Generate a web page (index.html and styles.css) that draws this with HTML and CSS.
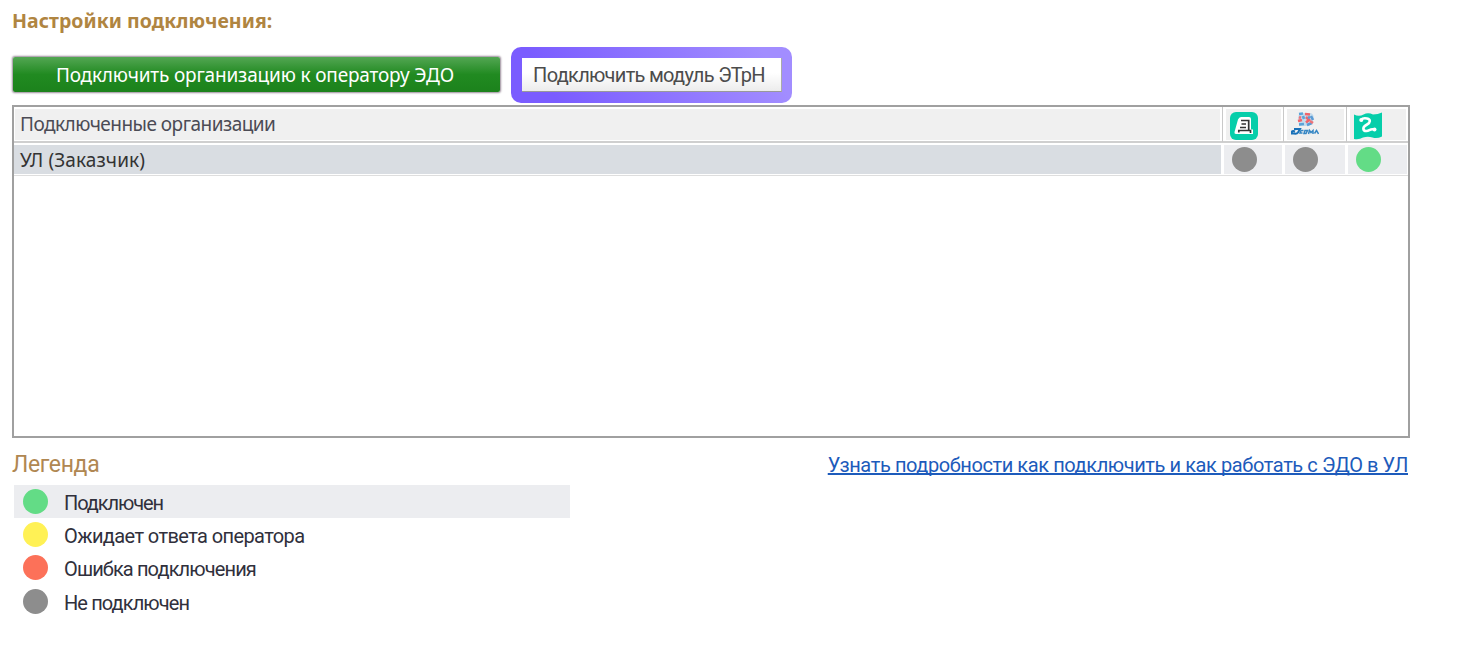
FILE: index.html
```html
<!DOCTYPE html>
<html lang="ru">
<head>
    <meta charset="utf-8">
    <title>Настройки подключения</title>
    <link rel="stylesheet" href="styles.css">
</head>
<body>
    <h1><span>Настройки подключения:</span></h1>

    <div class="buttons">
        <button type="button" class="btn-green"><span>Подключить организацию к оператору ЭДО</span></button>
        <div class="highlight">
            <button type="button" class="btn-light"><span>Подключить модуль ЭТрН</span></button>
        </div>
    </div>

    <div class="grid">
        <div class="row head">
            <div class="cell name"><span>Подключенные организации</span></div>
            <div class="cell">
                <svg class="icon" width="28" height="28" viewBox="0 0 28 28">
                    <rect width="28" height="28" rx="6" fill="#06ceaa"/>
                    <path d="M11 5H19Q21 5 21 7V17.500H23V22H6Q4 22 4.500 20L8 7.500Q9 5 11 5Z" fill="#fff"/>
                    <path d="M11 8.500H18.700V18.500M11.500 12H16M10 15.500H16M8.800 20.500V18.500H20.500V21" fill="none" stroke="#333" stroke-width="1.700"/>
                </svg>
            </div>
            <div class="cell">
                <svg class="icon" width="28" height="28" viewBox="0 0 28 28">
                    <path d="M9 1H20Q24 3 22 8Q22 12 17 14H8V9Q6 4 9 1Z" fill="#c4dcee"/>
                    <g fill="none" stroke-width="2.600">
                        <path d="M8 2L12 1.500M8 12.500L13 12M12 4L13 7" stroke="#5ba3d8"/>
                        <path d="M14 2L19 2.500M15 5L18 8L15 10.500M7 9L11 8" stroke="#f0646a"/>
                        <path d="M20 4L22 8M16 13L21 11M17 5L19 6" stroke="#5b9bd5"/>
                        <path d="M8 5L10 6M19 9L22 11" stroke="#ee7277"/>
                    </g>
                    <path d="M3 17H9L7 20.500Q6 22 3 21.500H0Q1 18 4 19.500" fill="none" stroke="#1770b8" stroke-width="2"/>
                    <path d="M12.500 18.500H10L9 21H11.500M14 18.500L13 21.500H15L16.500 18.500ZM17.500 22L18.500 18.500L20 20.500L22 18.500V22M23.500 21.500L25.500 18.500L27.500 22" fill="none" stroke="#3586c4" stroke-width="1.500"/>
                </svg>
            </div>
            <div class="cell">
                <svg class="icon" width="28" height="28" viewBox="0 0 28 28">
                    <path d="M0 2.500Q5 5 9.500 2.500T19 2.500Q24 2.500 28 .5V24.500Q23 27 18.500 25.500T9 25.500Q5 28 0 27Z" fill="#06ceaa"/>
                    <path d="M7 8Q9 5.500 13 6.500C17 7.500 16.500 10.500 13 12.500C8 15 8.500 19 12.500 19C15.500 19 16 16.500 20 17.500" fill="none" stroke="#fff" stroke-width="2.600" stroke-linecap="round"/>
                    <circle cx="7.300" cy="8" r="2" fill="#fff"/>
                    <circle cx="20.500" cy="17.500" r="2" fill="#fff"/>
                </svg>
            </div>
        </div>
        <div class="row data">
            <div class="cell name"><span>УЛ (Заказчик)</span></div>
            <div class="cell"><i class="dot gray"></i></div>
            <div class="cell"><i class="dot gray"></i></div>
            <div class="cell"><i class="dot green"></i></div>
        </div>
    </div>

    <div class="footer">
        <div class="legend">
            <h2><span>Легенда</span></h2>
            <ul>
                <li class="active"><i class="dot green"></i><span class="l1">Подключен</span></li>
                <li><i class="dot yellow"></i><span class="l2">Ожидает ответа оператора</span></li>
                <li><i class="dot red"></i><span class="l3">Ошибка подключения</span></li>
                <li><i class="dot gray"></i><span class="l4">Не подключен</span></li>
            </ul>
        </div>
        <a href="#"><span>Узнать подробности как подключить и как работать с ЭДО в УЛ</span></a>
    </div>
</body>
</html>
```

FILE: styles.css
```css
* {
    box-sizing: border-box;
}

body {
    margin: 0;
    padding: 0 56px 0 12px;
    background: #fff;
    font-family: "Noto Sans", sans-serif;
    font-size: 19px;
    color: #4b4b55;
}

h1 {
    margin: 0;
    padding-top: 8px;
    height: 47px;
    line-height: 26px;
    font-size: 19.5px;
    font-weight: bold;
    letter-spacing: .05px;
    color: #b08541;
}

.buttons {
    display: flex;
    align-items: flex-start;
    height: 58px;
}

button {
    border: 0;
    padding: 0;
    font-family: "Noto Sans", sans-serif;
    font-size: 19px;
    white-space: nowrap;
}

.btn-green {
    width: 487px;
    height: 35px;
    margin: 10px 11px 0 1px;
    padding-right: 3px;
    border-radius: 2px;
    background: linear-gradient(#53a653, #218a21 50%, #1c821c);
    box-shadow: 0 0 2px 1px #998a99;
    color: #fff;
    letter-spacing: -.17px;
}

.highlight {
    width: 281px;
    height: 56px;
    padding: 11px 10px 11px 11px;
    border-radius: 10px;
    background: linear-gradient(60deg, #7a5cff 15%, #a28dff 90%);
}

.btn-light {
    width: 260px;
    height: 34px;
    padding: 0 5px 0 0;
    border-right: 1px solid #aaa;
    border-bottom: 1px solid #999;
    background: linear-gradient(#fff 45%, #ececec);
    font-family: Roboto, sans-serif;
    font-size: 20px;
    letter-spacing: -.7px;
    color: #4c4c4c;
}

.grid {
    height: 333px;
    border: 2px solid #a0a0a0;
}

.row {
    display: grid;
    grid-template-columns: 1208px 61px 63px 1fr;
}

.head {
    height: 36px;
    border-bottom: 2px solid #cfcfcf;
}

.data {
    height: 33px;
    border-bottom: 1px solid #dedede;
    color: #333;
}

.cell {
    display: flex;
    align-items: center;
    background-clip: content-box;
    background-color: #f0f0f0;
}

.head .cell {
    padding: 2px 2px 2px 3px;
    border-left: 1px solid #c9c9c9;
}

.head .icon {
    flex: none;
    margin: 3px 0 0 4px;
}

.head .name {
    border-left: 0;
    padding-left: 1px;
}

.head .name span {
    margin: -1px 0 0 5px;
    letter-spacing: -.52px;
}

.data .cell {
    padding: 2px 1px 1px 2px;
    background-color: #ecedf0;
}

.data .name {
    padding-left: 0;
    background-color: #d9dde2;
}

.data .name span {
    margin: 1px 0 0 6px;
    letter-spacing: .1px;
}

.dot {
    flex: none;
    width: 25px;
    height: 25px;
    border-radius: 50%;
}

.data .dot {
    margin-left: 8px;
}

.green { background: #63dc86; }
.yellow { background: #fff155; }
.red { background: #fc7159; }
.gray { background: #8d8d8d; }

.footer {
    display: flex;
    justify-content: space-between;
    font-family: Roboto, sans-serif;
    color: #30303c;
}

h2 {
    margin: 0;
    height: 47px;
    padding-top: 12px;
    line-height: 29px;
    font-size: 23px;
    font-weight: normal;
    letter-spacing: -.35px;
    color: #b08752;
}

ul {
    width: 556px;
    margin: 0 0 0 2px;
    padding: 0;
    list-style: none;
}

li {
    display: flex;
    align-items: center;
    height: 33.2px;
    padding-left: 9px;
    font-size: 20px;
}

li span {
    margin: 3px 0 0 16px;
}

.l1 { letter-spacing: -1.1px; }
.l2 { letter-spacing: -.6px; }
.l3 { letter-spacing: -.87px; }
.l4 { letter-spacing: -.9px; }

.active {
    background: #ecedf0;
}

a {
    padding: 13px 2px 0 0;
    line-height: 28px;
    font-size: 20px;
    letter-spacing: -.41px;
    color: #1d5bbb;
    text-decoration: underline;
    text-decoration-thickness: 2px;
    text-underline-offset: 1px;
    text-decoration-skip-ink: none;
    white-space: nowrap;
}
```
